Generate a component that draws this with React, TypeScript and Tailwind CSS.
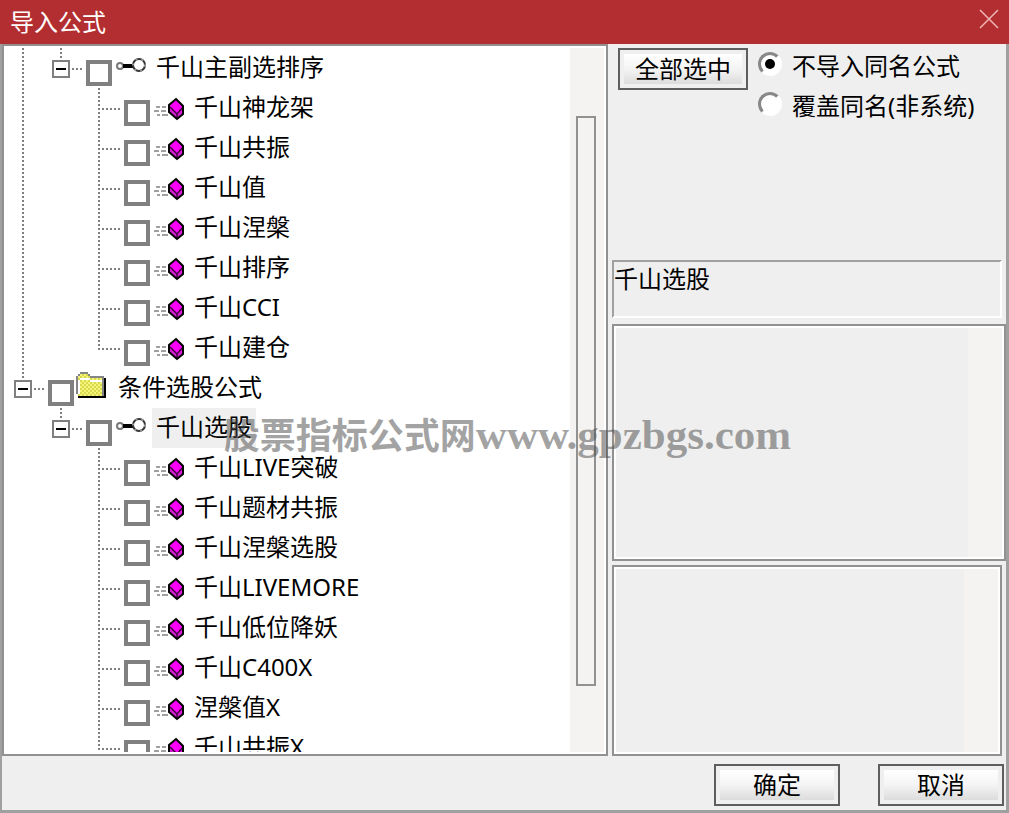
import React from "react";
import clsx from "clsx";

type Guide = "none" | "full" | "tee" | "end" | "toggle";
type Kind = "folder" | "group" | "formula";

interface TreeItem {
  label: string;
  kind: Kind;
  guides: Guide[];
  selected?: boolean;
}

const formula = (label: string, root: Guide, last = false): TreeItem => ({
  label,
  kind: "formula",
  guides: [root, "none", last ? "end" : "tee"],
});

const items: TreeItem[] = [
  { label: "千山主副选排序", kind: "group", guides: ["full", "toggle"] },
  formula("千山神龙架", "full"),
  formula("千山共振", "full"),
  formula("千山值", "full"),
  formula("千山涅槃", "full"),
  formula("千山排序", "full"),
  formula("千山CCI", "full"),
  formula("千山建仓", "full", true),
  { label: "条件选股公式", kind: "folder", guides: ["toggle"] },
  { label: "千山选股", kind: "group", guides: ["none", "toggle"], selected: true },
  formula("千山LIVE突破", "none"),
  formula("千山题材共振", "none"),
  formula("千山涅槃选股", "none"),
  formula("千山LIVEMORE", "none"),
  formula("千山低位降妖", "none"),
  formula("千山C400X", "none"),
  formula("涅槃值X", "none"),
  formula("千山共振X", "none", true),
];

const dotsY =
  "w-0.5 bg-[repeating-linear-gradient(to_bottom,#808080_0px,#808080_2px,transparent_2px,transparent_4px)]";
const dotsX =
  "h-0.5 bg-[repeating-linear-gradient(to_right,#808080_0px,#808080_2px,transparent_2px,transparent_4px)]";

const GuideCell = ({ type }: { type: Guide }) => {
  if (type === "toggle") {
    return (
      <div className="w-[38px] shrink-0 pl-2.5">
        <div className={clsx("ml-2 h-3", dotsY)} />
        <div className="flex items-center gap-0.5">
          <button
            type="button"
            aria-label="折叠"
            className="flex h-[18px] w-[18px] shrink-0 items-center justify-center border-2 border-[#808080] bg-white"
          >
            <span className="h-0.5 w-2.5 bg-black" />
          </button>
          <div className={clsx("w-2.5 shrink-0", dotsX)} />
        </div>
      </div>
    );
  }
  if (type === "none") return <div className="w-[38px] shrink-0" />;
  return (
    <div className="w-[38px] shrink-0 pl-[18px]">
      <div className={clsx("h-5", dotsY)} />
      {type === "full" ? (
        <div className={clsx("h-5", dotsY)} />
      ) : (
        <>
          <div className={clsx("w-[22px]", dotsX)} />
          {type === "tee" && <div className={clsx("mt-0.5 h-4", dotsY)} />}
        </>
      )}
    </div>
  );
};

const KeyIcon = () => (
  <svg viewBox="0 0 30 40" className="ml-1 h-10 w-[30px] shrink-0" aria-hidden="true">
    <circle cx="4" cy="18" r="3" fill="#fff" stroke="#777" strokeWidth="2" />
    <path d="M7 18H17" stroke="#000" strokeWidth="4" />
    <circle cx="23" cy="17" r="6" fill="#fff" stroke="#333" strokeWidth="2" />
    <circle cx="23" cy="17" r="6" fill="none" stroke="#999" strokeWidth="2" strokeDasharray="2 4" />
  </svg>
);

const FormulaIcon = () => (
  <svg viewBox="0 0 30 40" className="ml-1 h-10 w-[30px] shrink-0" aria-hidden="true">
    <path d="M2 19h4m2 0h4M0 23h5m2 0h5M3 27h3m2 0h6" stroke="#a0a0a0" strokeWidth="2" />
    <path d="M22 11l7 7v8l-5 5h-2l-7-7v-7z" fill="#d819d8" />
    <path d="M22 11l7 7-6 7-8-7z" fill="#f0f" />
    <path d="M16 19l7 7 6-7M23 26v5" fill="none" stroke="#40003c" strokeWidth="1.500" />
    <path d="M22 11l7 7v8l-6 5-8-7v-7z" fill="none" stroke="#000" strokeWidth="2" />
  </svg>
);

const FolderIcon = () => (
  <svg
    viewBox="0 0 16 20"
    className="ml-0.5 h-10 w-8 shrink-0"
    shapeRendering="crispEdges"
    aria-hidden="true"
  >
    <defs>
      <pattern id="folder-fill" width="2" height="2" patternUnits="userSpaceOnUse">
        <rect width="2" height="2" fill="#f4f47c" />
        <path d="M0 0h1v1H0zM1 1h1v1H1z" fill="#d9d94c" />
      </pattern>
    </defs>
    <path d="M14 5h1v10H1v-1h13z" fill="#000" />
    <path d="M0 4h1V3h1V2h4v1h1v1h7v10H1v-1H0z" fill="#858585" />
    <path d="M1 4h1V3h4v1h1v1h6v9H1z" fill="url(#folder-fill)" />
    <path d="M1 13V6h1V5h5v1h6v1H7V6H2v7z" fill="#fff" />
  </svg>
);

const icons = { folder: FolderIcon, group: KeyIcon, formula: FormulaIcon };

const TreeRow = ({ item, id }: { item: TreeItem; id: string }) => {
  const Icon = icons[item.kind];
  return (
    <li className="flex h-10 shrink-0">
      {item.guides.map((type, i) => (
        <GuideCell key={i} type={type} />
      ))}
      <input
        id={id}
        type="checkbox"
        className="ml-1.5 mt-3 h-[26px] w-[26px] shrink-0 appearance-none border-4 border-[#808080] bg-white checked:bg-[#404040]"
      />
      <Icon />
      <label
        htmlFor={id}
        className={clsx(
          "ml-1.5 h-10 whitespace-nowrap px-1 leading-[38px]",
          item.selected && "bg-[#efefef]"
        )}
      >
        {item.label}
      </label>
    </li>
  );
};

const PushButton = ({ children, className }: { children: React.ReactNode; className?: string }) => (
  <button
    type="button"
    className={clsx("h-[42px] border-2 border-[#5e5e5e] bg-[#efefef] p-1", className)}
  >
    <span className="flex h-full items-center justify-center bg-linear-to-b from-white via-[#f4f4f4] to-[#dcdcdc]">
      {children}
    </span>
  </button>
);

const RadioOption = ({ label, checked }: { label: string; checked?: boolean }) => (
  <label className="flex h-10 items-start">
    <input
      type="radio"
      name="import-mode"
      defaultChecked={checked}
      className="mt-1 grid h-6 w-6 shrink-0 appearance-none place-items-center rounded-full border-[3px] border-b-white border-l-[#888] border-r-white border-t-[#888] bg-white checked:before:h-2 checked:before:w-2 checked:before:rounded-full checked:before:bg-black checked:before:ring-1 checked:before:ring-black"
    />
    <span className="ml-2.5 whitespace-nowrap leading-9">{label}</span>
  </label>
);

const ListPanel = ({ className }: { className?: string }) => (
  <div className={clsx("flex justify-end border-2 border-[#919191] bg-white p-0.5", className)}>
    <div className="flex-1 bg-[#efefef]" />
    <div className="w-[34px] bg-[#f4f3f2]" />
  </div>
);

export default function App() {
  return (
    <div className="relative flex h-screen flex-col overflow-hidden bg-[#efefef] font-['Noto_Sans','Noto_Sans_CJK_SC',sans-serif] text-2xl text-black">
      <header className="flex h-11 shrink-0 items-center justify-between bg-[#b32e31] px-2.5 text-white">
        <h1 className="leading-[42px]">导入公式</h1>
        <button type="button" aria-label="关闭" className="mb-1.5">
          <svg viewBox="0 0 20 20" className="h-5 w-5" fill="none" stroke="#efb8b5" strokeWidth="1.500">
            <path d="M1 1L19 19M19 1L1 19" />
          </svg>
        </button>
      </header>

      <div className="flex min-h-0 flex-1 flex-col border-b-[3px] border-l-2 border-r-[3px] border-[#a0a0a0]">
        <div className="flex min-h-0 flex-1">
          <section className="flex min-w-0 flex-[606] border-2 border-[#919191] bg-white py-0.5 pr-0.5">
            <ul className="min-h-0 min-w-0 flex-1 overflow-hidden">
              {items.map((item, i) => (
                <TreeRow key={item.label} item={item} id={`formula-${i}`} />
              ))}
            </ul>
            <div className="flex w-[34px] shrink-0 flex-col bg-[#f4f3f2] pb-[66px] pl-1.5 pr-2 pt-[68px]">
              <div className="flex-1 border-2 border-[#919191]" />
            </div>
          </section>

          <section className="flex min-w-0 flex-[398] flex-col pl-1">
            <div className="flex h-[216px] shrink-0 items-start pl-1.5 pt-1">
              <PushButton className="w-[130px] shrink-0">全部选中</PushButton>
              <fieldset className="ml-2.5">
                <RadioOption label="不导入同名公式" checked />
                <RadioOption label="覆盖同名(非系统)" />
              </fieldset>
            </div>
            <p className="mr-1 h-[58px] shrink-0 border-2 border-b-white border-l-[#a0a0a0] border-r-white border-t-[#a0a0a0] leading-[34px]">
              千山选股
            </p>
            <ListPanel className="mt-1.5 flex-[238]" />
            <ListPanel className="mr-1 mt-1 flex-[190]" />
          </section>
        </div>

        <footer className="flex shrink-0 justify-end gap-[38px] pb-1 pr-0.5 pt-2">
          <PushButton className="w-[126px]">确定</PushButton>
          <PushButton className="w-[126px]">取消</PushButton>
        </footer>
      </div>

      <div className="pointer-events-none absolute inset-x-0 top-[410px] flex items-baseline justify-center whitespace-nowrap pl-1.5 font-['Liberation_Serif','Noto_Sans_CJK_SC',serif] font-bold leading-[50px] text-[#484848]/50">
        <span className="text-4xl">股票指标公式网</span>
        <span className="text-[43px]">www.gpzbgs.com</span>
      </div>
    </div>
  );
}
